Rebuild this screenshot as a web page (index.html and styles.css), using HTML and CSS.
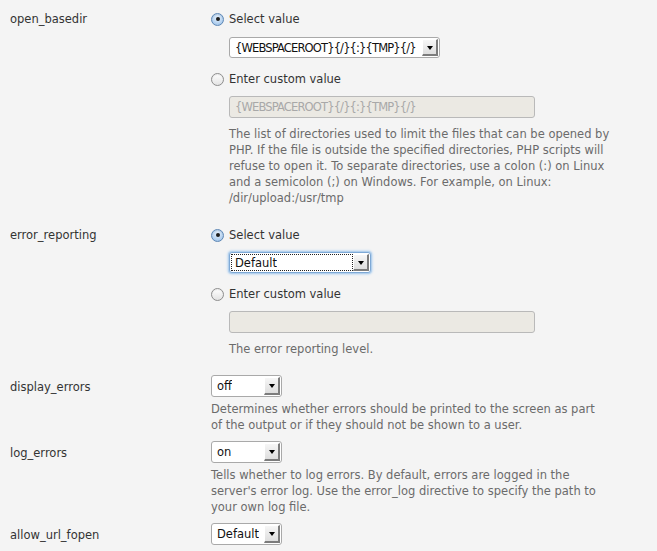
FILE: index.html
```html
<!DOCTYPE html>
<html>
<head>
<meta charset="utf-8">
<link rel="stylesheet" href="styles.css">
</head>
<body>
<div class="page">

  <div class="row radio-row first">
    <div class="label">open_basedir</div>
    <div class="field">
      <div class="opt"><span class="radio checked"></span><span>Select value</span></div>
      <div class="indent sel-wrap">
        <div class="select w-wide"><span class="sel-text tight">{WEBSPACEROOT}{/}{:}{TMP}{/}</span><span class="btn"><span class="tri"></span></span></div>
      </div>
      <div class="opt opt2"><span class="radio"></span><span>Enter custom value</span></div>
      <div class="indent in-wrap">
        <div class="input tight">{WEBSPACEROOT}{/}{:}{TMP}{/}</div>
      </div>
      <p class="desc indent">The list of directories used to limit the files that can be opened by PHP. If the file is outside the specified directories, PHP scripts will refuse to open it. To separate directories, use a colon (:) on Linux and a semicolon (;) on Windows. For example, on Linux: /dir/upload:/usr/tmp</p>
    </div>
  </div>

  <div class="row radio-row">
    <div class="label">error_reporting</div>
    <div class="field">
      <div class="opt"><span class="radio checked"></span><span>Select value</span></div>
      <div class="indent sel-wrap sel-wrap-2">
        <div class="select w-mid focused"><span class="sel-text">Default</span><span class="focus-ring"></span><span class="btn"><span class="tri"></span></span></div>
      </div>
      <div class="opt opt2"><span class="radio"></span><span>Enter custom value</span></div>
      <div class="indent in-wrap">
        <div class="input"></div>
      </div>
      <p class="desc indent">The error reporting level.</p>
    </div>
  </div>

  <div class="row sel-row">
    <div class="label">display_errors</div>
    <div class="field">
      <div class="select w-small"><span class="sel-text">off</span><span class="btn"><span class="tri"></span></span></div>
      <p class="desc desc-s">Determines whether errors should be printed to the screen as part of the output or if they should not be shown to a user.</p>
    </div>
  </div>

  <div class="row sel-row">
    <div class="label">log_errors</div>
    <div class="field">
      <div class="select w-small"><span class="sel-text">on</span><span class="btn"><span class="tri"></span></span></div>
      <p class="desc desc-s">Tells whether to log errors. By default, errors are logged in the server's error log. Use the error_log directive to specify the path to your own log file.</p>
    </div>
  </div>

  <div class="row sel-row">
    <div class="label">allow_url_fopen</div>
    <div class="field">
      <div class="select w-small"><span class="sel-text">Default</span><span class="btn"><span class="tri"></span></span></div>
      <p class="desc desc-s">Allows PHP file functions to retrieve data from remote locations over FTP or HTTP.</p>
    </div>
  </div>

</div>
</body>
</html>
```

FILE: styles.css
```css
html, body {
  margin: 0;
  padding: 0;
  background: #f4f4f4;
  height: 100%;
  overflow: hidden;
}

body {
  font-family: "DejaVu Sans", Verdana, sans-serif;
  font-size: 11.5px;
  line-height: 16px;
  color: #333;
}

.page {
  padding-top: 11px;
}

.row {
  display: flex;
}

.radio-row {
  padding-bottom: 18px;
}

.radio-row.first {
  padding-bottom: 21px;
}

.sel-row {
  padding-bottom: 8px;
}

.label {
  width: 201px;
  padding-left: 10px;
  flex: none;
}

.sel-row .label {
  padding-top: 4px;
}

.field {
  flex: 1;
  display: flex;
  flex-direction: column;
  align-items: flex-start;
}

.opt {
  display: flex;
  align-items: center;
  gap: 5px;
  height: 16px;
  color: #333;
}

.opt2 {
  margin-top: 13px;
}

.indent {
  margin-left: 18px;
}

.sel-wrap {
  margin-top: 10px;
}

.sel-wrap-2 {
  margin-top: 9px;
}

.in-wrap {
  margin-top: 9px;
}

.radio {
  width: 11px;
  height: 11px;
  border-radius: 50%;
  border: 1px solid #8d8d8d;
  background: linear-gradient(#ffffff, #e3e3e3);
  box-shadow: inset 0 1px 1px rgba(0,0,0,0.08);
  position: relative;
  flex: none;
}

.radio.checked {
  border-color: #5d87b5;
  background: radial-gradient(circle at 50% 35%, #e8f2fc 0%, #b5d2f0 60%, #8fb7e2 100%);
}

.radio.checked::after {
  content: "";
  position: absolute;
  left: 3.5px;
  top: 3.5px;
  width: 4px;
  height: 4px;
  border-radius: 50%;
  background: #1d1d1d;
}

.select {
  position: relative;
  height: 19px;
  border: 1px solid #a9a9a9;
  border-radius: 3px;
  background: #fff;
  color: #111;
  display: flex;
  align-items: center;
  box-sizing: content-box;
}

.w-wide { width: 209px; }
.w-mid { width: 140px; }
.w-small { width: 69px; height: 20px; }

.sel-text {
  padding-left: 5px;
  white-space: nowrap;
  overflow: hidden;
}

.tight {
  letter-spacing: -0.85px;
}

.btn {
  position: absolute;
  right: 1px;
  top: 1px;
  bottom: 1px;
  width: 13px;
  background: linear-gradient(#f6f6f6, #dedede);
  border-top: 1px solid #fff;
  border-left: 1px solid #fff;
  border-right: 2px solid #7c7c7c;
  border-bottom: 2px solid #7c7c7c;
  box-sizing: border-box;
  width: 16px;
  display: flex;
  align-items: center;
  justify-content: center;
}

.tri {
  width: 0;
  height: 0;
  border-left: 3.5px solid transparent;
  border-right: 3.5px solid transparent;
  border-top: 4px solid #000;
  margin-top: 1px;
}

.focused {
  border-color: #7ea9d6;
  box-shadow: 0 0 0 1px #b3d0ec, 0 0 2px 2px #cde0f3;
}

.focus-ring {
  position: absolute;
  left: 1px;
  top: 1px;
  right: 17px;
  bottom: 1px;
  border: 1px dotted #222;
}

.input {
  width: 299px;
  height: 20px;
  border: 1px solid #b9b9b9;
  border-radius: 3px;
  background: #ebe9e3;
  color: #a8a8a8;
  padding-left: 5px;
  line-height: 20px;
  white-space: nowrap;
}

.desc {
  margin: 8px 0 0 0;
  color: #6b6b6b;
  width: 400px;
}

.desc.indent {
  margin-left: 18px;
}

.desc-s {
  margin-top: 4px;
  width: 390px;
}
```
